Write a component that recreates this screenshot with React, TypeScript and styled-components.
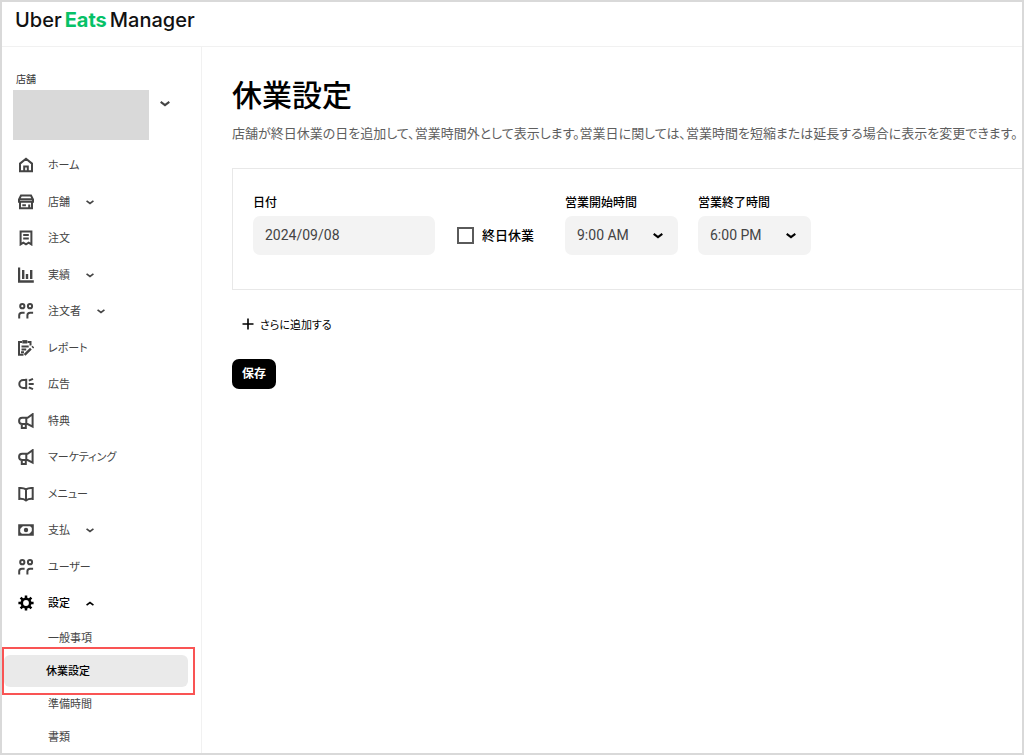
import React, { useState } from 'react';
import styled, { createGlobalStyle, css } from 'styled-components';

const GlobalStyle = createGlobalStyle`
  *, *::before, *::after { box-sizing: border-box; }
  body {
    margin: 0;
    background: #fff;
    color: #000;
    font-family: Roboto, 'Noto Sans CJK JP', sans-serif;
    font-size: 12px;
    line-height: 16px;
    font-feature-settings: 'palt';
  }
  button, input, select { font: inherit; font-feature-settings: inherit; color: inherit; }
  button { border: 0; background: none; padding: 0; cursor: pointer; }
`;

const Page = styled.div`
  display: flex;
  flex-direction: column;
  min-height: 100vh;
  border: 2px solid #d9d9d9;
`;

const Header = styled.header`
  display: flex;
  height: 45px;
  padding: 6px 13px 0;
  border-bottom: 1px solid #f1f1f1;
`;

const Logo = styled.a`
  display: flex;
  gap: 3px;
  height: 24px;
  font-family: Inter, 'Liberation Sans', sans-serif;
  font-size: 20px;
  font-weight: 500;
  line-height: 24px;
  color: #111;
  text-decoration: none;
  white-space: nowrap;

  b { color: #06c167; font-weight: 700; }
`;

const Body = styled.div`
  display: flex;
  flex: 1;
`;

const Sidebar = styled.aside`
  flex: 0 0 200px;
  padding-top: 25px;
  border-right: 1px solid #f1f1f1;
`;

const StoreLabel = styled.div`
  padding-left: 14px;
  font-size: 10px;
  color: #333;
`;

const StoreButton = styled.button`
  display: flex;
  gap: 10px;
  margin: 2px 0 7px 11px;
  color: #444;

  svg { margin-top: 11px; }
`;

const StoreName = styled.span`
  width: 136px;
  height: 50px;
  background: #d9d9d9;
`;

const List = styled.ul`
  margin: 0;
  padding: 0;
  list-style: none;
  font-size: 11px;
`;

const MenuList = styled(List)`
  & > li:nth-child(even) { padding-top: 1px; }
`;

const MenuLink = styled.a<{ $open?: boolean }>`
  display: flex;
  align-items: center;
  height: 36px;
  padding-left: 16px;
  color: ${p => (p.$open ? '#000' : '#444')};
  font-weight: ${p => (p.$open ? 500 : 400)};
  text-decoration: none;

  span { margin: 0 16px 0 14px; padding-top: 2px; }
`;

const SubList = styled(List)`
  display: grid;
  gap: 1px;
  margin-top: 1px;
`;

const SubItem = styled.li`
  position: relative;
`;

const SubLink = styled.a<{ $active?: boolean }>`
  display: flex;
  align-items: center;
  height: 32px;
  color: #444;
  padding-top: 2px;
  padding-left: 46px;
  text-decoration: none;
  ${p => p.$active && css`
    margin: 0 13px 0 2px;
    padding-left: 42px;
    border-radius: 6px;
    background: #eaeaea;
    color: #000;
    font-weight: 500;
  `}
`;

const Highlight = styled.div`
  position: absolute;
  inset: -8px 6px -8px 0;
  border: 2px solid #f95454;
  pointer-events: none;
`;

const Main = styled.main`
  flex: 1;
  min-width: 0;
  padding: 27px 0 30px 30px;
`;

const Title = styled.h1`
  margin: 0;
  font-size: 30px;
  font-weight: 500;
  line-height: 44px;
`;

const Description = styled.p`
  margin: 6px 0 0;
  font-size: 13px;
  line-height: 20px;
  color: #5e5e5e;
`;

const Card = styled.form`
  display: flex;
  flex-wrap: wrap;
  align-items: flex-end;
  margin-top: 24px;
  padding: 26px 20px 34px;
  border: solid #e8e8e8;
  border-width: 1px 0 1px 1px;
`;

const Field = styled.div<{ $width: number }>`
  display: flex;
  flex-direction: column;
  gap: 5px;
  width: ${p => p.$width}px;
  margin-right: 20px;

  label { font-weight: 500; white-space: nowrap; }
`;

const control = css`
  width: 100%;
  height: 39px;
  padding: 0 12px 2px;
  border: 0;
  border-radius: 7px;
  background: #f3f3f3;
  color: #444;
  font-size: 14px;
`;

const TextInput = styled.input`${control}`;

const SelectBox = styled.div`
  position: relative;

  select { ${control} appearance: none; }
  svg {
    position: absolute;
    right: 15px;
    top: 17px;
    color: #000;
    pointer-events: none;
  }
`;

const CheckLabel = styled.label`
  display: flex;
  align-items: center;
  gap: 8px;
  height: 39px;
  width: 110px;
  padding-left: 2px;
  font-size: 13px;
  font-weight: 500;
  white-space: nowrap;

  input {
    appearance: none;
    width: 17px;
    height: 17px;
    margin: 0;
    border: 2px solid #5a5a5a;
    background: #fff;
  }
  input:checked { background: #5a5a5a; }
`;

const AddButton = styled.button`
  display: flex;
  align-items: center;
  gap: 6px;
  margin: 26px 0 0 10px;
  font-size: 11px;

  span { padding-top: 2px; margin-bottom: -2px; }
`;

const SaveButton = styled.button`
  display: block;
  height: 30px;
  margin-top: 27px;
  padding: 0 10px;
  border-radius: 7px;
  background: #000;
  color: #fff;
  font-weight: 700;
`;

const Chevron = ({ up = false, size = 8 }: { up?: boolean; size?: number }) => (
  <svg width={size} height={size === 8 ? 5 : 6} viewBox="0 0 10 6" fill="none" stroke="currentColor" strokeWidth="2.1" aria-hidden="true">
    <path d={up ? 'M.7 5.1L5 1.9l4.3 3.2' : 'M.7 .9L5 4.1 9.3 .9'} />
  </svg>
);

const people = (
  <>
    <circle cx="4.3" cy="3.2" r="2.1" />
    <circle cx="12" cy="3.2" r="2.1" />
    <path d="M1.2 15.5v-3.2q0-2.6 2.7-2.6h2.7M9.4 15.5v-3.2q0-2.6 2.7-2.6h3" />
  </>
);

const megaphone = (
  <path d="M14.6 1.2v12.4L9.6 11H4.2a3 3 0 0 1 0-6.2h5.4zM8.3 5v6M3.8 11v4h4v-4" />
);

const icons: Record<string, React.ReactNode> = {
  home: <path d="M2 14.2V6.6l6-4.8 6 4.8v7.6zM6.2 14V9.6h3.6V14" />,
  store: (
    <path d="M3 1.5h10l2 4v2.2H1V5.5zM1.6 5.3h12.8M2 7.7v6.6h12V7.7M4.3 11.2h3.6M11.2 14v-3.6" />
  ),
  receipt: <path d="M2.6 1.5h10.8v12.9l-2.7-1.7L8 14.4l-2.7-1.7-2.7 1.7zM5.2 5h5.6M5.2 8.4h5.6" />,
  chart: <path d="M1 .5v14h14.8M5.2 12V3M9 12V7M13.2 12V3" strokeWidth="2.4" />,
  people,
  report: (
    <>
      <path d="M4 2H1v12.8h4.5M9.5 2h3v3.5M3.5 6.4h7.2M3.5 9.4h4.7M3 12.3h3" />
      <path d="M4.3 1.8h5" strokeWidth="3.4" />
      <path d="M6.6 14.8l6.3-6.2M14.3 7.7l1.1-1.1" strokeWidth="2.4" />
    </>
  ),
  ad: <path d="M8.2 2.7v10.6M8.2 4H5.3a4 4 0 0 0 0 8h2.9M10.7 8h5M10.8 4.7l4.2-1.9M10.8 11.3l4.2 1.9" />,
  megaphone,
  book: <path d="M8 3.4Q5.5 1.6 1.3 2v10.9q4.2-.3 6.7 1.6 2.5-1.9 6.7-1.6V2Q10.5 1.6 8 3.4zv11" />,
  money: (
    <>
      <path d="M1.2 3.2h13.6v9.6H1.2z" />
      <circle cx="8" cy="8" r="2.2" fill="currentColor" stroke="none" />
      <path d="M2 4h3L2 7zM14 12h-3l3-3zM14 4h-2l2 2zM2 12h2l-2-2z" fill="currentColor" stroke="none" />
    </>
  ),
  gear: (
    <>
      <circle cx="8" cy="8" r="4.2" strokeWidth="2.6" />
      <path d="M8 .4v3M8 12.6v3M.4 8h3M12.6 8h3M2.6 2.6l2.1 2.1M11.3 11.3l2.1 2.1M2.6 13.4l2.1-2.1M11.3 4.7l2.1-2.1" strokeWidth="2.5" />
    </>
  ),
};

const Icon = ({ name }: { name: string }) => (
  <svg width="16" height="16" viewBox="0 0 16 16" fill="none" stroke="currentColor" strokeWidth="2" aria-hidden="true">
    {icons[name]}
  </svg>
);

const menu: { icon: string; label: string; more?: boolean; open?: boolean }[] = [
  { icon: 'home', label: 'ホーム' },
  { icon: 'store', label: '店舗', more: true },
  { icon: 'receipt', label: '注文' },
  { icon: 'chart', label: '実績', more: true },
  { icon: 'people', label: '注文者', more: true },
  { icon: 'report', label: 'レポート' },
  { icon: 'ad', label: '広告' },
  { icon: 'megaphone', label: '特典' },
  { icon: 'megaphone', label: 'マーケティング' },
  { icon: 'book', label: 'メニュー' },
  { icon: 'money', label: '支払', more: true },
  { icon: 'people', label: 'ユーザー' },
  { icon: 'gear', label: '設定', more: true, open: true },
];

const settings = ['一般事項', '休業設定', '準備時間', '書類'];
const current = '休業設定';

const TimeSelect = ({ id, label, initial }: { id: string; label: string; initial: string }) => {
  const [value, setValue] = useState(initial);
  return (
    <Field $width={113}>
      <label htmlFor={id}>{label}</label>
      <SelectBox>
        <select id={id} value={value} onChange={e => setValue(e.target.value)}>
          <option>9:00 AM</option>
          <option>6:00 PM</option>
        </select>
        <Chevron size={10} />
      </SelectBox>
    </Field>
  );
};

export default function App() {
  return (
    <Page>
      <GlobalStyle />
      <Header>
        <Logo href="#">
          <span>Uber</span> <b>Eats</b> <span>Manager</span>
        </Logo>
      </Header>
      <Body>
        <Sidebar>
          <StoreLabel id="store-label">店舗</StoreLabel>
          <StoreButton type="button" aria-labelledby="store-label">
            <StoreName />
            <Chevron size={12} />
          </StoreButton>
          <nav>
            <MenuList>
              {menu.map(item => (
                <li key={item.label}>
                  <MenuLink href="#" $open={item.open}>
                    <Icon name={item.icon} />
                    <span>{item.label}</span>
                    {item.more && <Chevron up={item.open} />}
                  </MenuLink>
                </li>
              ))}
            </MenuList>
            <SubList>
              {settings.map(label => (
                <SubItem key={label}>
                  <SubLink href="#" $active={label === current}>{label}</SubLink>
                  {label === current && <Highlight />}
                </SubItem>
              ))}
            </SubList>
          </nav>
        </Sidebar>
        <Main>
          <Title>休業設定</Title>
          <Description>
            店舗が終日休業の日を追加して、営業時間外として表示します。営業日に関しては、営業時間を短縮または延長する場合に表示を変更できます。
          </Description>
          <Card>
            <Field $width={182}>
              <label htmlFor="date">日付</label>
              <TextInput id="date" type="text" defaultValue="2024/09/08" />
            </Field>
            <CheckLabel>
              <input type="checkbox" />
              終日休業
            </CheckLabel>
            <TimeSelect id="open-time" label="営業開始時間" initial="9:00 AM" />
            <TimeSelect id="close-time" label="営業終了時間" initial="6:00 PM" />
          </Card>
          <AddButton type="button">
            <svg width="12" height="12" viewBox="0 0 12 12" stroke="currentColor" strokeWidth="1.6" aria-hidden="true">
              <path d="M6 .5v11M.5 6h11" />
            </svg>
            <span>さらに追加する</span>
          </AddButton>
          <SaveButton type="button">保存</SaveButton>
        </Main>
      </Body>
    </Page>
  );
}
